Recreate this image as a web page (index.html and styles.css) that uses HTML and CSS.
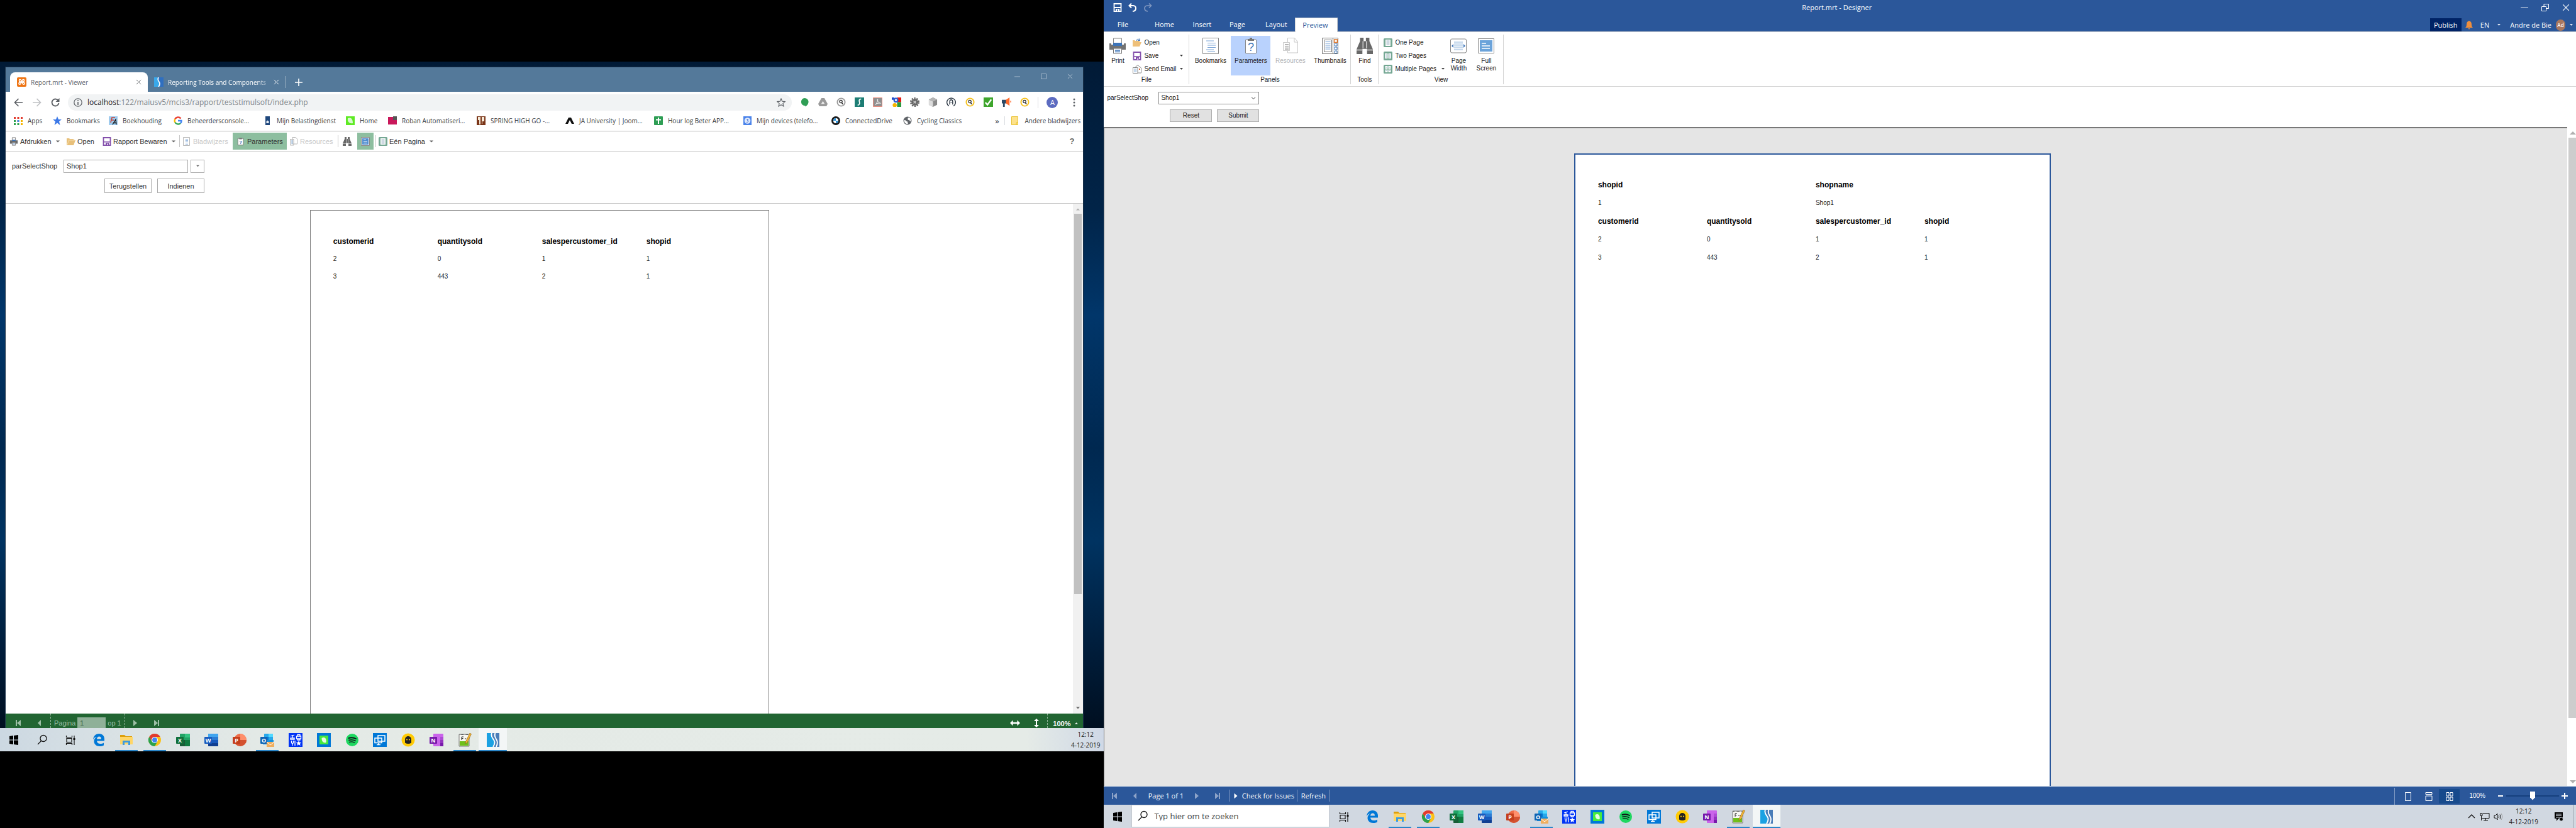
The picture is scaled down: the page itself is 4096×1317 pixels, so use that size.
FILE: index.html
```html
<!DOCTYPE html>
<html lang="nl">
<head>
<meta charset="utf-8">
<title>Report.mrt</title>
<link rel="stylesheet" href="styles.css">
</head>
<body>
<svg class="sprite" aria-hidden="true">
  <defs>
    <symbol id="win" viewBox="0 0 22 22"><path d="M4 5l6-1v6.500H4zM11 4l7-1v7.500h-7zM4 11.500h6V18l-6-1zM11 11.500h7V19l-7-1z" fill="#000"/></symbol>
    <symbol id="search" viewBox="0 0 22 22"><g fill="none" stroke="#111" stroke-width="1.300"><circle cx="13" cy="8.500" r="5"/><path d="M9.500 12.500L4 18"/></g></symbol>
    <symbol id="taskview" viewBox="0 0 22 22"><g fill="none" stroke="#111" stroke-width="1.200"><rect x="5" y="8.500" width="8" height="6"/><path d="M4.500 4v2.500h9V4M4.500 19v-2.500h9V19M17 4v15"/></g><path d="M15.500 8h3v3h-3z" fill="#111"/></symbol>
    <symbol id="edge" viewBox="0 0 22 22"><path d="M2 10.500C2.500 5 6 1 11.500 1c5.500 0 8.500 4 8.500 8.500v3H8c.3 3 2.500 4.500 5.500 4.500 2 0 3.800-.5 5.500-1.500v4c-2 1-4.200 1.500-6.500 1.500C7 21 3.500 17.500 3.500 13c0-3 1.500-5.500 4.500-7-3 .5-5 2-6 4.500zM8 9.500h7c0-2.500-1.200-4-3.300-4C9.700 5.500 8.400 7 8 9.500z" fill="#0078d7"/></symbol>
    <symbol id="folderbig" viewBox="0 0 22 22"><path d="M1 3h7l2 2h10v4H1z" fill="#dd9f0b"/><path d="M1 6h20v12H1z" fill="#ffd667"/><path d="M5 12h12v7h-3v-4H8v4H5z" fill="#3c9be0"/></symbol>
    <symbol id="chrome" viewBox="0 0 22 22"><circle cx="11" cy="11" r="10" fill="#fbc116"/><path d="M2.300 6A10 10 0 0 1 19.700 6H11L6.500 13.500z" fill="#e23b2e"/><path d="M2.300 6A10 10 0 0 0 11 21l4.500-7.500H6.600z" fill="#2ba24c"/><circle cx="11" cy="11" r="5" fill="#fff"/><circle cx="11" cy="11" r="3.900" fill="#4285f4"/></symbol>
    <symbol id="excel" viewBox="0 0 22 22"><rect x="6" y="1" width="16" height="20" rx="1" fill="#21a366"/><path d="M14 1h7a1 1 0 0 1 1 1v5h-8z" fill="#33c481"/><path d="M6 11h8v10H7a1 1 0 0 1-1-1z" fill="#185c37"/><path d="M14 11h8v9a1 1 0 0 1-1 1h-7z" fill="#107c41"/><rect y="6" width="12" height="11" rx="1" fill="#0f703b"/><text x="6" y="15" class="ico-letter">X</text></symbol>
    <symbol id="word" viewBox="0 0 22 22"><rect x="6" y="1" width="16" height="20" rx="1" fill="#2b7cd3"/><path d="M6 1h16v5H6z" fill="#41a5ee"/><path d="M6 11h16v5H6z" fill="#185abd"/><path d="M6 16h16v4a1 1 0 0 1-1 1H7a1 1 0 0 1-1-1z" fill="#103f91"/><rect y="6" width="12" height="11" rx="1" fill="#185abd"/><text x="6" y="15" class="ico-letter">W</text></symbol>
    <symbol id="ppt" viewBox="0 0 22 22"><circle cx="12" cy="11" r="10" fill="#ed6c47"/><path d="M12 1a10 10 0 0 1 10 10H12z" fill="#ff8f6b"/><path d="M2 11h20a10 10 0 0 1-20 0z" fill="#d35230"/><rect y="6" width="12" height="11" rx="1" fill="#c43e1c"/><text x="6" y="15" class="ico-letter">P</text></symbol>
    <symbol id="outlook" viewBox="0 0 22 22"><rect x="6" y="1" width="14" height="15" rx="1" fill="#28a8ea"/><path d="M6 6h7v5H6z" fill="#0078d4"/><path d="M13 1h7v5h-7z" fill="#50d9ff"/><path d="M4 11h17v7H4z" fill="#1490df"/><rect y="6" width="11" height="11" rx="1" fill="#0f64b4"/><text x="5.500" y="15" class="ico-letter">O</text><path d="M10 14h12v8H10z" fill="#efae5e"/><path d="M10 14l6 5 6-5" fill="none" stroke="#fff"/></symbol>
    <symbol id="tools" viewBox="0 0 22 22"><path d="M0 0h22v22H0z" fill="#0033f5"/><g stroke="#fff" stroke-width="1.300" fill="none"><path d="M3 8h6v2H3zM3 5l6-2M6 3v5M12.500 5h7v4h-7zM14 5V2.500h4V5M14 9v2h4V9M4.500 12v3a1.500 1.500 0 0 0 3 0v-3M6 16v4M10 12v8"/></g><path d="M16 12l1.200 2.800 3 .2-2.300 1.900.8 3-2.700-1.700-2.600 1.700.7-3-2.300-1.900 3-.2z" fill="#fff"/></symbol>
    <symbol id="leafapp" viewBox="0 0 22 22"><path d="M0 0h22v22H0z" fill="#0078d7"/><path d="M4 4h14v14H4z" fill="#46ea3c"/><path d="M7.500 8c5-3 8 1 7 7-4 1-7-1-7-7z" fill="#e6fbe4"/></symbol>
    <symbol id="spotify" viewBox="0 0 22 22"><circle cx="11" cy="11" r="10" fill="#1ed760"/><g fill="none" stroke="#10141a" stroke-linecap="round"><path d="M5.500 8c4-1.200 8-.8 11.500 1" stroke-width="1.900"/><path d="M6 11.300c3.500-1 7-.6 10 1" stroke-width="1.600"/><path d="M6.500 14.300c3-.7 5.800-.4 8.300 1" stroke-width="1.300"/></g></symbol>
    <symbol id="remote" viewBox="0 0 22 22"><path d="M0 0h22v22H0z" fill="#0078d7"/><g fill="#0078d7" stroke="#fff" stroke-width="1.500"><path d="M8 4h11v9H8zM3 8h11v7.500H3zM6 18.500h6M9 15.500v3"/></g></symbol>
    <symbol id="ghost" viewBox="0 0 22 22"><circle cx="11" cy="11" r="10.500" fill="#ffcb05"/><path d="M6 15.500V10a5 5 0 0 1 10 0v5.500q-2.500 1.500-5 1.500t-5-1.500z" fill="#222"/><circle cx="9" cy="10.500" r="1.100" fill="#ffcb05"/><circle cx="13" cy="10.500" r="1.100" fill="#ffcb05"/></symbol>
    <symbol id="onenote" viewBox="0 0 22 22"><rect x="6" y="1" width="16" height="20" rx="1" fill="#ca64ea"/><path d="M17 6h5v5h-5z" fill="#ae4bd5"/><path d="M17 11h5v5h-5z" fill="#9332bf"/><path d="M17 16h5v5h-5z" fill="#7719aa"/><rect y="6" width="12" height="11" rx="1" fill="#7719aa"/><text x="6" y="15" class="ico-letter">N</text></symbol>
    <symbol id="notepad" viewBox="0 0 22 22"><path d="M2 2h16v19H2z" fill="#f7f7f2" stroke="#777"/><path d="M3 13h14v7H3z" fill="#6fbf1a"/><path d="M3 2.500h14" stroke="#444" stroke-dasharray="1 1"/><path d="M6 11V6h3M6 8.500h2.500M11 9h2M14 9h2" stroke="#222" fill="none"/><path d="M19 0l2.500 1.500L15 15l-3 2 .5-3.500z" fill="#f2b632" stroke="#8d5a1b" stroke-width=".6"/></symbol>
    <symbol id="stimul" viewBox="0 0 22 22"><path d="M1 0h20v22H1z" fill="#4a7db8"/><path d="M1 0h8c-2 6 5 9 5 14 0 3-1 6-2 8H1z" fill="#1ba1e2"/><path d="M9 0c-3 7 4 9 4.500 14 .2 3-1 6-2.500 8M14.500 0c-3 6 2 9 3 13 .8 3-.5 7-1.500 9" stroke="#fff" stroke-width="1.900" fill="none"/></symbol>

    <symbol id="printer" viewBox="0 0 14 16"><path d="M4 1h6v5H4z" fill="#fff" stroke="#777"/><path d="M0 6h14v6H0z" fill="#6b6b6b"/><path d="M4 5h6v2H4z" fill="#3d74b8"/><path d="M4 10h6v5H4z" fill="#fff" stroke="#777"/><path d="M5 12.500h4" stroke="#3d74b8"/></symbol>
    <symbol id="folder" viewBox="0 0 14 14"><path d="M0 13V2h4l1 1h6v2h3l-3 8z" fill="#e8c07a"/><path d="M1 12l2.500-7H13" fill="none" stroke="#f5dcaa"/></symbol>
    <symbol id="folderopen" viewBox="0 0 14 14"><path d="M0 13V3h3l1 1h7v2h3l-3 7z" fill="#eec07a"/><path d="M6 4c0-3 4-4 5-1M11.500 0v3.500H8" fill="none" stroke="#3d74b8"/></symbol>
    <symbol id="disk" viewBox="0 0 14 14"><path d="M1.500 1h11v12h-11z" fill="#fff" stroke="#8450ac" stroke-width="1.800"/><path d="M1 7h12v1.500H1z" fill="#8450ac"/><path d="M5 9h5v4H5z" fill="#8450ac"/><path d="M7.500 10.500h1.500V13H7.500z" fill="#fff"/></symbol>
    <symbol id="diskwhite" viewBox="0 0 14 14"><path d="M1.500 1h11v12h-11zM1 7h12" fill="none" stroke="#fff" stroke-width="1.800"/><path d="M4 9h6v4H4z" fill="#fff"/><path d="M6 10h1.500v3H6z" fill="#2b579a"/></symbol>
    <symbol id="listpage" viewBox="0 0 14 14"><path d="M1.500.5h10v13h-10z" fill="#fff" stroke="#9a9a9a"/><path d="M4 3.500h5M4 5.500h5M4 7.500h5M4 9.500h5M4 11.500h5" stroke="#7ba4d6" stroke-dasharray="1 1 5"/></symbol>
    <symbol id="clip" viewBox="0 0 14 16"><path d="M1.500 2.500h10v12h-10z" fill="#fff" stroke="#777"/><path d="M4 1.500h5V4H4z" fill="#777"/><text x="6.500" y="12" class="ico-q">?</text></symbol>
    <symbol id="docs" viewBox="0 0 14 14"><path d="M5 .5h5L12.500 3v8H5zM1.500 3.500H7v9.500H1.500z" fill="#fff" stroke="#999"/><path d="M3 6h3M3 8h3M3 10h3" stroke="#6b9bd0"/></symbol>
    <symbol id="binoc" viewBox="0 0 14 14"><path d="M3 0h3v3h2V0h3v3l3 7v4H9v-4.500H5V14H0v-4l3-7z" fill="#686868"/><path d="M5.500 3v6M8.500 3v6M0 10.500h5M9 10.500h5" stroke="#e0e0e0" stroke-width=".7"/></symbol>
    <symbol id="full" viewBox="0 0 14 14"><path d="M.5.500h13v13H.5z" fill="#fff" stroke="#888"/><path d="M2 2h10v10H2z" fill="#4e8cd0"/><path d="M4 4.500h4M4 7h6M4 9.500h6" stroke="#fff"/></symbol>
    <symbol id="onepage" viewBox="0 0 14 14"><rect width="14" height="14" rx="1.500" fill="#74a793"/><path d="M3 2h8v10H3z" fill="#fff"/><path d="M4.500 4h5M4.500 6h5M4.500 8h5M4.500 10h5" stroke="#9fb4c6"/></symbol>
    <symbol id="twopages" viewBox="0 0 14 14"><rect width="14" height="14" rx="1.500" fill="#74a793"/><path d="M2 3h4.500v8H2zM7.500 3H12v8H7.500z" fill="#fff"/><path d="M3 5h2.500M3 7h2.500M3 9h2.500M8.500 5H11M8.500 7H11M8.500 9H11" stroke="#9fb4c6"/></symbol>
    <symbol id="multipages" viewBox="0 0 14 14"><rect width="14" height="14" rx="1.500" fill="#74a793"/><path d="M2.500 2h4v4.500h-4zM7.500 2h4v4.500h-4zM2.500 7.500h4V12h-4zM7.500 7.500h4V12h-4z" fill="#fff"/><path d="M3.500 4h2M8.500 4h2M3.500 9.500h2M8.500 9.500h2" stroke="#9fb4c6"/></symbol>
    <symbol id="mail" viewBox="0 0 14 14"><path d="M3 5l5-4.500L13.500 5v8H3z" fill="#fff" stroke="#888"/><path d="M.5 4.500h7.500v9H.5z" fill="#fff" stroke="#888"/><path d="M2 7h4.500M2 9h4.500M2 11h4.500" stroke="#8eb4dc"/><path d="M10 6h2v2h-2z" fill="#e0643c"/></symbol>
    <symbol id="bell" viewBox="0 0 12 14"><path d="M6 0c3 1 4 3 4 6 0 2 .5 4 2 5H0c1.500-1 2-3 2-5 0-3 1-5 4-6zM4.500 12h3L6 14z" fill="#ef8e3c"/></symbol>
    <symbol id="magn" viewBox="0 0 16 16"><circle cx="8" cy="8" r="6.500" fill="#fff" stroke="currentColor" stroke-width="2"/><circle cx="7.500" cy="7" r="2.300" fill="none" stroke="#222" stroke-width="1.300"/><path d="M9 9l2 2.500" stroke="#222" stroke-width="1.500"/></symbol>
    <symbol id="down" viewBox="0 0 8 4"><path d="M0 0h8L4 4z" fill="currentColor"/></symbol>
    <symbol id="up" viewBox="0 0 8 4"><path d="M0 4h8L4 0z" fill="currentColor"/></symbol>
    <symbol id="first" viewBox="0 0 10 12"><path d="M1 1h2v10H1zM9 1v10L3 6z" fill="currentColor"/></symbol>
    <symbol id="prev" viewBox="0 0 10 12"><path d="M7 1v10L2 6z" fill="currentColor"/></symbol>
    <symbol id="next" viewBox="0 0 10 12"><path d="M2 1v10l6-5z" fill="currentColor"/></symbol>
    <symbol id="last" viewBox="0 0 10 12"><path d="M7 1h2v10H7zM1 1v10l6-5z" fill="currentColor"/></symbol>
    <symbol id="cross" viewBox="0 0 10 10"><path d="M1 1l8 8M9 1L1 9" stroke="currentColor" fill="none"/></symbol>
    <symbol id="dash" viewBox="0 0 12 10"><path d="M0 5.500h12" stroke="currentColor"/></symbol>
  </defs>
</svg>

<main class="desktops">
  <section class="screen screen-left">
    <div class="wallpaper">
      <div class="browser">
        <header class="tabstrip">
          <div class="tab tab-on">
            <svg class="i15" viewBox="0 0 15 15"><rect width="15" height="15" rx="2" fill="#ee7414"/><path d="M3.500 4.500c0-1.500 2.500-1.500 3 0L9 10c.5 1.500 3 1.500 3 0 0-1-1-2-2-2H5c-1 0-2 1-2 2 0 1.500 2.500 1.500 3 0l2.500-5.500c.5-1.500 3-1.500 3 0S10.500 7 10 7H5c-.8 0-1.500-1-1.500-2.500z" fill="none" stroke="#fff" stroke-width="1.500"/></svg>
            <span>Report.mrt - Viewer</span>
            <button class="x" aria-label="Tab sluiten"><svg class="i9"><use href="#cross"/></svg></button>
          </div>
          <div class="tab">
            <svg class="i15" viewBox="0 0 15 15"><path d="M0 0h15v15H0z" fill="#2f6fc0"/><path d="M0 0h6c-2 5 3 6 3 10 0 2-1 4-2 5H0z" fill="#39a8ea"/><path d="M7 0c-3 6 2 6 2 10 0 2-1 4-2 5" stroke="#fff" stroke-width="1.700" fill="none"/></svg>
            <span class="fade">Reporting Tools and Components</span>
            <button class="x" aria-label="Tab sluiten"><svg class="i9"><use href="#cross"/></svg></button>
          </div>
          <button class="newtab" aria-label="Nieuw tabblad"><svg class="i12" viewBox="0 0 12 12"><path d="M6 0v12M0 6h12" stroke="#fff" stroke-width="1.600"/></svg></button>
          <div class="winctl">
            <button aria-label="Minimaliseren"><svg class="i9"><use href="#dash"/></svg></button>
            <button aria-label="Maximaliseren"><svg class="i9" viewBox="0 0 10 10"><path d="M.5.500h9v9h-9z" fill="none" stroke="currentColor"/></svg></button>
            <button aria-label="Sluiten"><svg class="i9"><use href="#cross"/></svg></button>
          </div>
        </header>

        <div class="navbar">
          <button aria-label="Vorige"><svg class="i14" viewBox="0 0 14 14"><path d="M14 7H1.500M7.500 1L1.500 7l6 6" fill="none" stroke="#5a5e63" stroke-width="1.700"/></svg></button>
          <button aria-label="Volgende"><svg class="i14" viewBox="0 0 14 14"><path d="M0 7h12.500M6.500 1l6 6-6 6" fill="none" stroke="#bfc1c4" stroke-width="1.700"/></svg></button>
          <button aria-label="Vernieuwen"><svg class="i14" viewBox="0 0 14 14"><path d="M12 4.500A5.500 5.500 0 1 0 12.500 8" fill="none" stroke="#5a5e63" stroke-width="1.800"/><path d="M13.500 0v6h-6z" fill="#5a5e63"/></svg></button>
          <div class="omnibox">
            <svg class="i14" viewBox="0 0 14 14"><circle cx="7" cy="7" r="6.200" fill="none" stroke="#5f6368" stroke-width="1.300"/><path d="M7 3v1.700M7 6v5" stroke="#5f6368" stroke-width="1.600"/></svg>
            <div class="url"><label for="url">localhost</label><input id="url" value=":122/maiusv5/mcis3/rapport/teststimulsoft/index.php"></div>
            <svg class="i14" viewBox="0 0 14 14"><path d="M7 1l1.800 4.200 4.500.4-3.400 3 1 4.400L7 10.700 3.100 13l1-4.400-3.400-3 4.500-.4z" fill="none" stroke="#5f6368" stroke-width="1.200"/></svg>
          </div>
          <div class="exts">
            <svg viewBox="0 0 16 16"><path d="M8 1a6.500 6.500 0 0 1 6.500 6.500C14.500 11 12 14 9 15.500V14A6.500 6.500 0 1 1 8 1z" fill="#2f9e55"/></svg>
            <svg viewBox="0 0 16 16"><path d="M5.500 1h5L16 11l-2 4H2l-2-4z" fill="#9a9a9a"/><path d="M8 6l3 5H5z" fill="#eee"/></svg>
            <svg class="grey"><use href="#magn"/></svg>
            <svg viewBox="0 0 16 16"><path d="M0 0h16v16H0z" fill="#1c7d74"/><path d="M11 3C8 2 7 5 8 7.500S8 13 5 13" fill="none" stroke="#fff" stroke-width="1.800"/></svg>
            <svg viewBox="0 0 16 16"><path d="M.5.500h15v15H.5z" fill="#8f8f8f" stroke="#f08877"/><path d="M4 12c3-2 5-8 4-9s-1 5 5 7c-3-1-6 0-9 2z" fill="none" stroke="#fff"/></svg>
            <svg viewBox="0 0 16 16"><path d="M0 0h16v16H0z" fill="#fff"/><path d="M9 0h7v8H9z" fill="#e31b12"/><path d="M9 8h7v8H9z" fill="#2b9a3e"/><path d="M0 0h4v4H0z" fill="#1d49c7"/><circle cx="7" cy="4.500" r="3" fill="#fff" stroke="#2f5fd0" stroke-width="2.500"/><circle cx="5" cy="13" r="3.500" fill="#f6b400"/></svg>
            <svg viewBox="0 0 16 16"><circle cx="8" cy="8" r="6.500" fill="none" stroke="#666" stroke-width="3" stroke-dasharray="2.500 1.600"/><circle cx="8" cy="8" r="5.500" fill="#666"/><path d="M6 6l4 4M6 10l1-1M9 7l1-1" stroke="#fff" stroke-width="1.300"/></svg>
            <svg viewBox="0 0 16 16"><path d="M8 0l7 3.500v9L8 16l-7-3.500v-9z" fill="#8a8a8a"/><path d="M8 7v9l-7-3.500v-9z" fill="#dcdcdc"/><path d="M8 0l7 3.500L8 7 1 3.500z" fill="#b5b5b5"/></svg>
            <svg viewBox="0 0 16 16"><path d="M4 14.500a7.300 7.300 0 1 1 8 0M5.500 12V7a2.500 3 0 0 1 5 0v5" fill="none" stroke="#2b3642" stroke-width="1.500"/><path d="M6 8.500h4" stroke="#2b3642" stroke-dasharray="1 .5"/></svg>
            <svg class="yellow"><use href="#magn"/></svg>
            <svg viewBox="0 0 16 16"><path d="M0 0h16v16H0z" fill="#3ea52c"/><path d="M3 8.500l3.500 4L13 3.500" fill="none" stroke="#fff" stroke-width="2.500"/></svg>
            <svg viewBox="0 0 16 16"><path d="M0 4h8v6H5v6H2v-6H0z" fill="#2c4a66"/><path d="M7 4l6-4v14L7 10z" fill="#ff6a2b"/><path d="M15 5.500v3" stroke="#ff6a2b" stroke-width="1.500"/></svg>
            <svg class="yellow"><use href="#magn"/></svg>
          </div>
          <div class="profile"><button class="avatar" aria-label="Profiel">A</button></div>
          <button aria-label="Menu"><svg class="i14" viewBox="0 0 14 14"><g fill="#5f6368"><circle cx="7" cy="2" r="1.500"/><circle cx="7" cy="7" r="1.500"/><circle cx="7" cy="12" r="1.500"/></g></svg></button>
        </div>

        <nav class="bookmarks">
          <a href="#"><svg viewBox="0 0 14 14"><path d="M0 1h3v3H0zM5.500 1h3v3h-3zM11 1h3v3h-3z" fill="#e23b2e"/><path d="M0 6h3v3H0z" fill="#2ba24c"/><path d="M5.500 6h3v3h-3zM11 6h3v3h-3zM11 11h3v3h-3z" fill="#f4b400"/><path d="M0 11h3v3H0zM5.500 11h3v3h-3z" fill="#2ba24c"/><path d="M5.500 6h3v3h-3z" fill="#4285f4"/></svg>Apps</a>
          <a href="#"><svg viewBox="0 0 14 14"><path d="M7 0l2 5h5l-4 3.300L11.500 14 7 10.600 2.500 14 4 8.300 0 5h5z" fill="#3b78e7"/></svg>Bookmarks</a>
          <a href="#"><svg viewBox="0 0 14 14"><path d="M0 0h14v14H0z" fill="#9fcbee"/><path d="M3 10l2-8h5M4 6h4" stroke="#c8463c" stroke-width="1.500" fill="none"/><path d="M6 13l5-8 1 8M8 10.500h4" stroke="#111" stroke-width="1.400" fill="none"/></svg>Boekhouding</a>
          <a href="#"><svg viewBox="0 0 14 14"><g fill="none" stroke-width="2.400"><path d="M11.500 3.500A5.500 5.500 0 0 0 2.300 4.500" stroke="#ea4335"/><path d="M2.300 4.500a5.500 5.500 0 0 0 0 5" stroke="#fbbc05"/><path d="M2.300 9.500a5.500 5.500 0 0 0 8.700 1.500" stroke="#34a853"/><path d="M11 11c1-1 1.600-2.500 1.500-4H7" stroke="#4285f4"/></g></svg>Beheerdersconsole...</a>
          <a href="#"><svg viewBox="0 0 14 14"><path d="M4 0h7v14H4z" fill="#1f477c"/><path d="M5.500 11V8l2-1.500 2 1.500v3z" fill="#e8eef5"/></svg>Mijn Belastingdienst</a>
          <a href="#"><svg viewBox="0 0 14 14"><path d="M0 0h14v14H0z" fill="#5fea24"/><path d="M3 3c5-2 8 1 8 8-5 1-9-2-8-8z" fill="#d7f9ce"/></svg>Home</a>
          <a href="#"><svg viewBox="0 0 14 14"><path d="M0 1h14v12H0z" fill="#c9185b"/><path d="M8 0h6v6H8z" fill="#555"/></svg>Roban Automatiseri...</a>
          <a href="#"><svg viewBox="0 0 14 14"><path d="M0 0h14v14H0z" fill="#7a3518"/><path d="M2 1h4v12H4V6H2zM8 1h4v7H9v4H8z" fill="#f6ead8"/></svg>SPRING HIGH GO -...</a>
          <a href="#"><svg viewBox="0 0 14 14"><path d="M0 12L5 2h4l5 10h-4L7 6l-3 6z" fill="#111"/></svg>JA University | Joom...</a>
          <a href="#"><svg viewBox="0 0 14 14"><rect width="14" height="14" rx="1" fill="#2f9e55"/><path d="M7 2v10M3 5.500h8" stroke="#fff" stroke-width="2"/></svg>Hour log Beter APP...</a>
          <a href="#"><svg viewBox="0 0 14 14"><path d="M1 0h13v14H1z" fill="#4a83ea"/><circle cx="7.500" cy="7" r="4.800" fill="#dfe9fb"/><path d="M6 4.500h2.500L7.500 6.500c2 0 2 3-1.500 3" stroke="#3367d6" fill="none"/></svg>Mijn devices (telefo...</a>
          <a href="#"><svg viewBox="0 0 14 14"><circle cx="7" cy="7" r="7" fill="#1b1b1b"/><circle cx="7" cy="7" r="4" fill="#fff"/><path d="M7 3v4H3a4 4 0 0 1 4-4zM7 11V7h4a4 4 0 0 1-4 4z" fill="#2f93d8"/></svg>ConnectedDrive</a>
          <a href="#"><svg viewBox="0 0 14 14"><circle cx="7" cy="7" r="6.500" fill="#5f6368"/><path d="M2 6c3 0 2 2 4 2s1 4 2 4c-4 1-7-3-6-6zM8 2c3 0 5 3 4 6-2 0-1-2-3-2S7 4 8 2z" fill="#fff"/></svg>Cycling Classics</a>
          <button class="more" aria-label="Meer bladwijzers">»</button>
          <a href="#" class="other"><svg viewBox="0 0 14 14"><path d="M1.500.500h10v13h-10z" fill="#fde28c" stroke="#e8c12e"/><path d="M9 13.500V10h2.500" fill="none" stroke="#e8c12e"/></svg>Andere bladwijzers</a>
        </nav>

        <div class="viewerbar">
          <button><svg><use href="#printer"/></svg>Afdrukken<svg class="arr"><use href="#down"/></svg></button>
          <button><svg><use href="#folder"/></svg>Open</button>
          <button><svg><use href="#disk"/></svg>Rapport Bewaren<svg class="arr"><use href="#down"/></svg></button>
          <i class="vsep"></i>
          <button disabled><svg><use href="#listpage"/></svg>Bladwijzers</button>
          <button class="on"><svg><use href="#clip"/></svg>Parameters</button>
          <button disabled><svg><use href="#docs"/></svg>Resources</button>
          <i class="vsep"></i>
          <button aria-label="Zoeken"><svg><use href="#binoc"/></svg></button>
          <button class="on" aria-label="Volledig scherm"><svg><use href="#full"/></svg></button>
          <i class="vsep"></i>
          <button><svg><use href="#onepage"/></svg>Eén Pagina<svg class="arr"><use href="#down"/></svg></button>
          <button class="help">?</button>
        </div>

        <form class="vparams">
          <label for="shop-l">parSelectShop</label>
          <input id="shop-l" value="Shop1">
          <button type="button" class="drop" aria-label="Kies"><svg class="arr"><use href="#down"/></svg></button>
          <div class="vbtns"><button type="button">Terugstellen</button><button type="button">Indienen</button></div>
        </form>

        <div class="viewport">
          <article class="sheet sheet-l">
            <table class="data">
              <tr><th>customerid</th><th>quantitysold</th><th>salespercustomer_id</th><th>shopid</th></tr>
              <tr><td>2</td><td>0</td><td>1</td><td>1</td></tr>
              <tr><td>3</td><td>443</td><td>2</td><td>1</td></tr>
            </table>
          </article>
          <div class="scroll"><svg class="arr pale"><use href="#up"/></svg><i class="thumb"></i><i class="rest"></i><svg class="arr"><use href="#down"/></svg></div>
        </div>

        <footer class="pager">
          <button aria-label="Eerste"><svg class="i12"><use href="#first"/></svg></button>
          <button aria-label="Vorige"><svg class="i12"><use href="#prev"/></svg></button>
          <div class="pageno"><label for="pg">Pagina</label><input id="pg" value="1"><span>op 1</span></div>
          <button aria-label="Volgende"><svg class="i12"><use href="#next"/></svg></button>
          <button aria-label="Laatste"><svg class="i12"><use href="#last"/></svg></button>
          <span class="spring"></span>
          <button class="fit" aria-label="Paginabreedte"><svg class="i16" viewBox="0 0 14 14"><path d="M0 7l4-4v3h6V3l4 4-4 4V8H4v3z" fill="#fff"/></svg></button>
          <button class="fit" aria-label="Paginahoogte"><svg class="i14" viewBox="0 0 14 14"><path d="M7 0l4 4H8v6h3l-4 4-4-4h3V4H3z" fill="#fff"/></svg></button>
          <button class="zoom">100%<svg class="tiny"><use href="#up"/></svg></button>
        </footer>
      </div>
    </div>
    <footer class="taskbar taskbar-l">
      <div class="tasks tasks18">
        <button aria-label="Start"><svg><use href="#win"/></svg></button>
        <button aria-label="Zoeken"><svg><use href="#search"/></svg></button>
        <button aria-label="Taakweergave"><svg><use href="#taskview"/></svg></button>
        <button aria-label="Edge"><svg><use href="#edge"/></svg></button>
        <button aria-label="Verkenner" class="open"><svg><use href="#folderbig"/></svg></button>
        <button aria-label="Chrome" class="open"><svg><use href="#chrome"/></svg></button>
        <button aria-label="Excel"><svg><use href="#excel"/></svg></button>
        <button aria-label="Word"><svg><use href="#word"/></svg></button>
        <button aria-label="PowerPoint"><svg><use href="#ppt"/></svg></button>
        <button aria-label="Outlook" class="open"><svg><use href="#outlook"/></svg></button>
        <button aria-label="Beheer"><svg><use href="#tools"/></svg></button>
        <button aria-label="Leaf"><svg><use href="#leafapp"/></svg></button>
        <button aria-label="Spotify"><svg><use href="#spotify"/></svg></button>
        <button aria-label="Extern bureaublad"><svg><use href="#remote"/></svg></button>
        <button aria-label="Ghost"><svg><use href="#ghost"/></svg></button>
        <button aria-label="OneNote"><svg><use href="#onenote"/></svg></button>
        <button aria-label="Notepad++" class="open"><svg><use href="#notepad"/></svg></button>
        <button aria-label="Designer" class="active"><svg><use href="#stimul"/></svg></button>
      </div>
      <div class="clock"><span>12:12</span><span>4-12-2019</span></div>
    </footer>
  </section>

  <section class="screen screen-right">
    <header class="titlebar">
      <div class="quick">
        <button aria-label="Save"><svg class="i14"><use href="#diskwhite"/></svg></button>
        <button aria-label="Undo"><svg class="i14" viewBox="0 0 14 14"><path d="M2 4h6c5 0 6 8-1 9M5 .5L1.500 4 5 7.500" fill="none" stroke="#fff" stroke-width="2"/></svg></button>
        <button aria-label="Redo"><svg class="i14" viewBox="0 0 14 14"><path d="M12 4H6C1 4 0 12 7 13M9 .5L12.500 4 9 7.500" fill="none" stroke="#8097c0" stroke-width="1.700"/></svg></button>
      </div>
      <h1>Report.mrt - Designer</h1>
      <div class="winbtns">
        <button aria-label="Minimize"><svg class="i12"><use href="#dash"/></svg></button>
        <button aria-label="Restore"><svg class="i12" viewBox="0 0 12 12"><path d="M.5 4.500h7v7h-7zM4 4V.5h7.500v7H8" fill="none" stroke="currentColor"/></svg></button>
        <button aria-label="Close"><svg class="i12"><use href="#cross"/></svg></button>
      </div>
    </header>
    <nav class="ribtabs">
      <button>File</button><button>Home</button><button>Insert</button><button>Page</button><button>Layout</button><button class="sel">Preview</button>
      <div class="account">
        <button class="publish">Publish</button>
        <svg class="bell"><use href="#bell"/></svg>
        <button class="lang">EN<svg class="tiny"><use href="#down"/></svg></button>
        <button class="user">Andre de Bie<b>Ad</b><svg class="tiny"><use href="#down"/></svg></button>
      </div>
    </nav>

    <div class="ribbon">
      <section class="group g-file">
        <div class="tools">
          <button class="big"><svg viewBox="0 0 26 26"><path d="M6.500 1h13v11h-13z" fill="#fff" stroke="#888"/><path d="M0 9h3v2h20V9h3v10H0z" fill="#737373"/><path d="M6 8h14v5H6z" fill="#3d74b8"/><path d="M6.500 17h13v8h-13z" fill="#fff" stroke="#737373"/><path d="M9 20h8M9 22.500h8" stroke="#3d74b8" stroke-width="1.300"/></svg><span>Print</span></button>
          <div class="stack">
            <button><svg><use href="#folderopen"/></svg>Open</button>
            <button><svg><use href="#disk"/></svg>Save<svg class="tiny"><use href="#down"/></svg></button>
            <button><svg><use href="#mail"/></svg>Send Email<svg class="tiny"><use href="#down"/></svg></button>
          </div>
        </div>
        <h2>File</h2>
      </section>
      <section class="group g-panels">
        <div class="tools">
          <button class="big"><svg viewBox="0 0 26 26"><path d="M.5.500h25v25H.5z" fill="#fff" stroke="#888"/><path d="M6 5h12M8 8.500h13M8 12h13M8 15.500h13M6 19h12M8 22h12" stroke="#7ba4d6" stroke-width="1.200"/></svg><span>Bookmarks</span></button>
          <button class="big sel"><svg viewBox="0 0 26 26"><rect x="4.500" y="3" width="17" height="22" rx="1" fill="#fff" stroke="#888"/><path d="M8 2h3V0h4v2h3v3H8z" fill="#777"/><text x="13" y="21" class="ico-q big-q">?</text></svg><span>Parameters</span></button>
          <button class="big" disabled><svg viewBox="0 0 26 26"><path d="M8.500.500h11l5 6v17.500h-16zM19 1v6h5.500" fill="#fff" stroke="#c8c8c8"/><path d="M1.500 7.500h10v13h-10z" fill="#fff" stroke="#c8c8c8"/><path d="M4 11h6M4 14.500h6M4 18h6" stroke="#b5b5b5" stroke-width="2"/></svg><span>Resources</span></button>
          <button class="big"><svg viewBox="0 0 26 26"><path d="M.5.500h25v25H.5z" fill="#fff" stroke="#777"/><path d="M3.500 3.500h12v19h-12z" fill="#fff" stroke="#777"/><path d="M5.500 6h8M5.500 9h8M5.500 12h8M5.500 15h8M5.500 18h8" stroke="#7ba4d6" stroke-width="1.200"/><path d="M17.500 1v25" stroke="#777"/><path d="M20 9h4v4h-4zM20 15h4v4h-4zM20 21h4v3.500h-4z" fill="#fff" stroke="#3d74b8"/><path d="M19.500 3h5v4.500h-5z" fill="#fff" stroke="#e0782c" stroke-width="1.500"/></svg><span>Thumbnails</span></button>
        </div>
        <h2>Panels</h2>
      </section>
      <section class="group g-tools">
        <div class="tools"><button class="big"><svg><use href="#binoc"/></svg><span>Find</span></button></div>
        <h2>Tools</h2>
      </section>
      <section class="group g-view">
        <div class="tools">
          <div class="stack">
            <button><svg><use href="#onepage"/></svg>One Page</button>
            <button><svg><use href="#twopages"/></svg>Two Pages</button>
            <button><svg><use href="#multipages"/></svg>Multiple Pages<svg class="tiny"><use href="#down"/></svg></button>
          </div>
          <button class="big"><svg viewBox="0 0 26 26"><rect x=".5" y="2" width="25" height="22" rx="2" fill="#fff" stroke="#888"/><path d="M6 7h14M6 10h14M6 13h14M6 16h14M6 19h14" stroke="#8eb4dc"/><path d="M2 13l3-3v6zM24 13l-3-3v6z" fill="#3d74b8"/></svg><span>Page<br>Width</span></button>
          <button class="big"><svg viewBox="0 0 26 26"><path d="M.5 1.500h25v23H.5z" fill="#fff" stroke="#888"/><path d="M3 4h20v18H3z" fill="#6ba3da"/><path d="M6 9h7M6 13h13M6 17h13" stroke="#fff" stroke-width="1.400"/></svg><span>Full<br>Screen</span></button>
        </div>
        <h2>View</h2>
      </section>
    </div>

    <form class="dparams">
      <label for="shop-r">parSelectShop</label>
      <div class="combo"><select id="shop-r"><option>Shop1</option></select><svg class="i8" viewBox="0 0 8 8"><path d="M1 2.500l3 3 3-3" fill="none" stroke="#444"/></svg></div>
      <div class="dbtns"><button type="button">Reset</button><button type="button">Submit</button></div>
    </form>

    <div class="preview">
      <div class="canvas">
        <article class="sheet sheet-r">
          <table class="data two">
            <tr><th>shopid</th><th>shopname</th></tr>
            <tr><td>1</td><td>Shop1</td></tr>
          </table>
          <table class="data">
            <tr><th>customerid</th><th>quantitysold</th><th>salespercustomer_id</th><th>shopid</th></tr>
            <tr><td>2</td><td>0</td><td>1</td><td>1</td></tr>
            <tr><td>3</td><td>443</td><td>2</td><td>1</td></tr>
          </table>
        </article>
      </div>
      <div class="scroll scroll-r"><svg class="arr pale"><use href="#up"/></svg><i class="thumb"></i><i class="rest"></i><svg class="arr pale"><use href="#down"/></svg></div>
    </div>

    <footer class="status">
      <button class="dim" aria-label="First"><svg class="i12"><use href="#first"/></svg></button>
      <button class="dim" aria-label="Previous"><svg class="i12"><use href="#prev"/></svg></button>
      <span>Page 1 of 1</span>
      <button class="dim" aria-label="Next"><svg class="i12"><use href="#next"/></svg></button>
      <button class="dim" aria-label="Last"><svg class="i12"><use href="#last"/></svg></button>
      <button class="check"><svg class="i10"><use href="#next"/></svg>Check for Issues</button>
      <button class="refresh">Refresh</button>
      <span class="spring"></span>
      <div class="modes">
        <button aria-label="One page"><svg class="i14" viewBox="0 0 14 14"><path d="M2.500.500h9v13h-9z" fill="none" stroke="#fff"/></svg></button>
        <button aria-label="Continuous"><svg class="i14" viewBox="0 0 14 14"><path d="M2 .5h10v3H2zM2 6h10v7.500H2z" fill="none" stroke="#fff"/></svg></button>
        <button class="sel" aria-label="Multiple pages"><svg class="i14" viewBox="0 0 14 14"><path d="M2 .5h4V6H2zM8 .5h4V6H8zM2 8h4v5.500H2zM8 8h4v5.500H8z" fill="none" stroke="#fff"/></svg></button>
      </div>
      <label class="pct" for="zoom">100%</label>
      <button aria-label="Zoom out"><svg class="i10" viewBox="0 0 10 10"><path d="M1 5h8" stroke="#fff" stroke-width="2"/></svg></button>
      <input type="range" id="zoom" min="0" max="100" value="50">
      <button aria-label="Zoom in"><svg class="i10" viewBox="0 0 10 10"><path d="M0 5h10M5 0v10" stroke="#fff" stroke-width="2"/></svg></button>
    </footer>

    <footer class="taskbar taskbar-r">
      <button class="start" aria-label="Start"><svg class="i22"><use href="#win"/></svg></button>
      <div class="find"><svg class="i22"><use href="#search"/></svg><input aria-label="Zoeken" value="Typ hier om te zoeken"></div>
      <div class="tasks tasks16">
        <button aria-label="Taakweergave"><svg><use href="#taskview"/></svg></button>
        <button aria-label="Edge"><svg><use href="#edge"/></svg></button>
        <button aria-label="Verkenner" class="open"><svg><use href="#folderbig"/></svg></button>
        <button aria-label="Chrome" class="open"><svg><use href="#chrome"/></svg></button>
        <button aria-label="Excel"><svg><use href="#excel"/></svg></button>
        <button aria-label="Word"><svg><use href="#word"/></svg></button>
        <button aria-label="PowerPoint"><svg><use href="#ppt"/></svg></button>
        <button aria-label="Outlook" class="open"><svg><use href="#outlook"/></svg></button>
        <button aria-label="Beheer"><svg><use href="#tools"/></svg></button>
        <button aria-label="Leaf"><svg><use href="#leafapp"/></svg></button>
        <button aria-label="Spotify"><svg><use href="#spotify"/></svg></button>
        <button aria-label="Extern bureaublad"><svg><use href="#remote"/></svg></button>
        <button aria-label="Ghost"><svg><use href="#ghost"/></svg></button>
        <button aria-label="OneNote"><svg><use href="#onenote"/></svg></button>
        <button aria-label="Notepad++" class="open"><svg><use href="#notepad"/></svg></button>
        <button aria-label="Designer" class="active"><svg><use href="#stimul"/></svg></button>
      </div>
      <div class="tray">
        <svg class="i14" viewBox="0 0 14 14"><path d="M2 9l5-5 5 5" fill="none" stroke="#111" stroke-width="1.300"/></svg>
        <svg class="i16" viewBox="0 0 16 16"><path d="M5 2.500h10v8H3.500M9.500 10.500V14M6 14h7M1 2.500h3v4H1zM2.500 6.500V14" fill="none" stroke="#111"/></svg>
        <svg class="i16" viewBox="0 0 16 16"><path d="M1 6h2l3-3v10l-3-3H1z" fill="none" stroke="#111"/><path d="M8 6q1.500 2 0 4M10 4.500q2.500 3.500 0 7" fill="none" stroke="#111"/><path d="M12 3q3.500 5 0 10" fill="none" stroke="#999"/></svg>
      </div>
      <div class="clock"><span>12:12</span><span>4-12-2019</span></div>
      <button class="notes" aria-label="Meldingen"><svg class="i16" viewBox="0 0 16 16"><path d="M2 1h13v10h-7l-3 4v-4H2z" fill="#000"/><path d="M4 4h9M4 6.500h9M4 9h6" stroke="#d1d8e1"/><circle cx="12.500" cy="12" r="3" fill="#000" stroke="#d1d8e1"/></svg></button>
    </footer>
  </section>
</main>
</body>
</html>
```
FILE: styles.css
```css
* { box-sizing: border-box; }
body { margin: 0; background: #000; font-family: "Open Sans", "Noto Sans", sans-serif; font-size: 11px; line-height: 14px; color: #333; white-space: nowrap; }
button, input, select { font: inherit; color: inherit; margin: 0; padding: 0; border: 0; background: none; border-radius: 0; outline: 0; }
button { display: flex; align-items: center; justify-content: center; }
a { color: inherit; text-decoration: none; display: flex; align-items: center; }
svg { display: block; flex: none; }
h1, h2 { margin: 0; font: inherit; }
.sprite { width: 0; height: 0; position: absolute; }
.i8 { width: 8px; height: 8px; }
.i9 { width: 9px; height: 9px; }
.i10 { width: 10px; height: 10px; }
.i12 { width: 12px; height: 12px; }
.i14 { width: 14px; height: 14px; }
.i15 { width: 15px; height: 15px; }
.i16 { width: 16px; height: 16px; }
.i22 { width: 22px; height: 22px; }
.arr { width: 6px; height: 4px; color: #666; }
.tiny { width: 5px; height: 3px; }
.pale { color: #b0b0b0; }
.spring { flex: 1; }
.ico-letter { font: bold 9px "Open Sans", sans-serif; fill: #fff; text-anchor: middle; }
.ico-q { font: bold 9px "Liberation Sans", sans-serif; fill: #3d74b8; text-anchor: middle; }
.big-q { font-size: 18px; font-weight: 400; }

.desktops { display: flex; height: 100vh; }
.screen { display: flex; flex-direction: column; min-width: 0; }
.screen-left { flex: 3 1 0; padding: 98px 0 122px; }
.screen-right { flex: 4 1 0; background: #fff; }

/* Left screen: browser */
.wallpaper { flex: 1; min-height: 0; display: flex; padding: 9px 33px 0 9px; background: linear-gradient(#011a36, #012448 22%, #01366a 38%, #002850 58%, #003361 72%, #001d3b 88%, #000f20); }
.browser { flex: 1; min-width: 0; display: flex; flex-direction: column; background: #fff; box-shadow: 0 0 0 1px #1b3149; }
.tabstrip { height: 39px; display: flex; align-items: flex-end; background: #54799a; padding-left: 7px; color: #fff; font-size: 10px; }
.tab { height: 31px; display: flex; align-items: center; gap: 7px; width: 219px; padding: 0 10px 0 11px; }
.tab-on { background: #fff; color: #5f6368; border-radius: 8px 8px 0 0; }
.tab span { flex: 1; }
.tab:not(.tab-on) { padding-left: 10px; }
.fade { mask-image: linear-gradient(90deg, #000 88%, rgba(0, 0, 0, .2)); }
.newtab { width: 40px; height: 19px; margin-bottom: 6px; border-left: 1px solid #a5b8c8; }
.winctl { margin-left: auto; align-self: flex-start; display: flex; color: #b4c5d4; }
.winctl button { width: 42px; height: 28px; }

.navbar { height: 33px; display: grid; grid-template-columns: 30px 29px 29px 1fr 380px 50px 28px; padding-left: 5px; align-items: center; }
.omnibox { height: 26px; margin: 0 5px 0 6px; padding: 0 10px 0 9px; border-radius: 13px; background: #f1f3f4; display: flex; align-items: center; gap: 8px; }
.url { flex: 1; display: flex; font-size: 12px; line-height: 18px; }
.url label { color: #202124; }
.url input { flex: 1; color: #80868b; }
.exts { display: grid; grid-template-columns: repeat(13, 1fr); justify-items: center; }
.exts svg { width: 15px; height: 15px; }
.grey { color: #999; }
.yellow { color: #f5bf16; }
.profile { margin-left: 6px; padding-left: 13px; border-left: 1px solid #dadce0; }
.avatar { height: 18px; width: 18px; border-radius: 9px; background: #5c6bc0; color: #fff; }

.bookmarks { height: 30px; border-bottom: 1px solid #b6b6b6; padding: 0 5px 3px 13px; display: grid; align-items: center; font-size: 10px; color: #3c4043; grid-template-columns: 62px 89px 103px 142px 132px 67px 141px 141px 141px 141px 141px 114px 1fr 24px 120px; }
.bookmarks a { gap: 8px; }
.bookmarks svg { width: 14px; height: 14px; }
.more { font-size: 13px; }
.other { border-left: 1px solid #dadce0; padding-left: 9px; }

.viewerbar { height: 32px; border-bottom: 1px solid #c6c6c6; padding-left: 6px; display: grid; align-items: center; grid-template-columns: 91px 57px 122px 5px 80px 90px 77px 8px 23px 29px 5px 100px 1fr; font-family: "Liberation Sans", Arial, sans-serif; color: #333; }
.viewerbar button { gap: 3px; justify-content: flex-start; height: 27px; }
.viewerbar svg { width: 14px; height: 14px; }
.viewerbar .arr, .vparams .arr { width: 6px; height: 4px; margin-left: 4px; }
.viewerbar button:disabled { color: #c8c8c8; }
.viewerbar button:disabled svg { opacity: .7; }
.viewerbar .on { background: #8dbe9f; justify-self: start; padding: 0 6px; }
.vsep { height: 19px; width: 1px; background: #c6c6c6; }
.viewerbar .help { justify-self: end; padding-right: 14px; font-size: 13px; font-weight: bold; color: #666; }

.vparams { height: 83px; border-bottom: 1px solid #c6c6c6; padding: 12px 10px; display: grid; grid-template-columns: 78px 198px 22px; column-gap: 4px; row-gap: 9px; align-content: start; align-items: center; justify-content: start; font-family: "Liberation Sans", Arial, sans-serif; }
.vparams label { line-height: 22px; }
.vparams > input { height: 21px; border: 1px solid #ababab; padding: 0 4px; }
.vparams button { border: 1px solid #ababab; height: 22px; width: 75px; }
.vparams .drop { width: 22px; height: 21px; }
.vparams .drop svg { margin: 0; width: 5px; }
.vbtns { grid-column: 1 / -1; display: flex; justify-content: flex-end; gap: 9px; }
.vbtns button { height: 23px; }

.viewport { flex: 1; min-height: 0; display: grid; grid-template-columns: 1fr 16px; }
.sheet { background: #fff; font-family: "Liberation Sans", Arial, sans-serif; color: #000; }
.sheet-l { width: 730px; margin: 10px auto 0; border: 1px solid #7d7d7d; border-bottom: 0; padding: 35px 28px 0 36px; }
.data { width: 100%; table-layout: fixed; border-collapse: collapse; }
.data th, .data td { padding: 0; text-align: left; height: 28px; font-size: 10px; color: #222; }
.data th { font-size: 12px; color: #000; }
.scroll { background: #f1f1f1; display: flex; flex-direction: column; align-items: center; padding: 7px 0; gap: 5px; }
.scroll .thumb { flex: 782 1 0; width: 12px; background: #c1c1c1; }
.scroll .rest { flex: 218 1 0; }

.pager { height: 23px; background: #216532; color: #9dbfa6; display: flex; align-items: flex-end; overflow: hidden; font-family: "Liberation Sans", Arial, sans-serif; padding-left: 3px; }
.pager button { width: 34px; height: 16px; }
.pageno { display: flex; align-items: flex-end; height: 23px; padding: 0 0 0 5px; width: 118px; border: dashed #8fb398; border-width: 0 1px; gap: 3px; line-height: 16px; }
.pageno input { width: 45px; height: 17px; background: #8fb098; color: #3c5f45; padding-left: 4px; }
.pager .fit { color: #fff; }
.pager .zoom { width: 57px; height: 23px; padding-top: 8px; border-left: 1px dashed #8fb398; color: #fff; font-weight: bold; gap: 7px; }

/* Taskbars */
.taskbar { height: 37px; display: flex; flex: none; color: #1b1b1b; }
.taskbar-l { background: linear-gradient(90deg, #ccd8e2, #dbe3e5 12%, #e4eae6 25%, #e5ebe7 93%, #cfd8e6); }
.taskbar-r { background: #d1d8e1; }
.tasks { display: grid; }
.tasks18 { width: 806px; grid-template-columns: repeat(18, 1fr); }
.tasks16 { width: 717px; grid-template-columns: repeat(16, 1fr); }
.tasks svg { width: 22px; height: 22px; }
.tasks .open { background: linear-gradient(#2a86c8, #2a86c8) center bottom / 36px 2px no-repeat; }
.tasks .active { background: linear-gradient(#2a86c8, #2a86c8) center bottom / 100% 2px no-repeat #f3f6f6; }
.clock { display: flex; flex-direction: column; align-items: center; justify-content: center; font-size: 10px; line-height: 17px; }
.taskbar-l .clock { margin-left: auto; padding-right: 6px; }
.start { width: 44px; }
.find { width: 315px; margin-bottom: 1px; background: #fff; border: 1px solid #c4c9cf; display: flex; align-items: center; padding-left: 6px; gap: 7px; font-size: 13px; color: #444; }
.find input { flex: 1; }
.tray { margin-left: auto; display: flex; align-items: center; gap: 6px; padding-right: 9px; }
.notes { width: 48px; border-right: 1px solid #9aa3ad; margin: 0 4px 0 8px; }

/* Right screen: designer */
.titlebar { height: 24px; flex: none; background: #2b579a; color: #fff; display: grid; grid-template-columns: 1fr auto 1fr; align-items: center; }
.titlebar h1 { padding-right: 10px; }
.quick { display: flex; gap: 10px; padding-left: 15px; }
.winbtns { display: flex; justify-content: flex-end; }
.winbtns button { width: 33px; height: 22px; }
.ribtabs { height: 27px; flex: none; background: #2b579a; border-bottom: 1px solid #d4d4d4; color: #fff; display: grid; grid-template-columns: 60px 72px 48px 64px 60px 68px 1fr; align-items: end; }
.ribtabs > button { height: 22px; }
.ribtabs .sel { background: #fff; color: #2b579a; height: 23px; margin-bottom: -1px; border: 1px solid #d4d4d4; border-bottom: 0; padding-right: 4px; }
.account { display: flex; justify-content: flex-end; align-items: center; height: 21px; align-self: end; }
.publish { background: #002366; width: 50px; height: 21px; margin-right: 6px; }
.bell { width: 12px; height: 14px; margin-right: 12px; }
.lang { gap: 13px; margin-right: 15px; }
.user { gap: 7px; padding-right: 5px; }
.user b { width: 15px; height: 18px; border-radius: 9px; background: #a8775f; font-size: 8px; line-height: 18px; font-weight: 600; text-align: center; }

.ribbon { height: 87px; flex: none; display: flex; padding-top: 4px; border-bottom: 1px solid #d4d4d4; font: 10px/12px "Liberation Sans", Arial, sans-serif; color: #222; }
.group { height: 79px; border-right: 1px solid #d4d4d4; display: flex; flex-direction: column; }
.g-file { width: 136px; }
.g-panels { width: 257px; }
.g-tools { width: 44px; }
.g-view { width: 199px; }
.tools { display: flex; height: 65px; padding-top: 2px; }
.group h2 { text-align: center; line-height: 14px; }
.big { flex-direction: column; justify-content: flex-start; gap: 5px; height: 63px; padding: 3px 0 0; }
.big svg { width: 26px; height: 26px; }
.big span { text-align: center; line-height: 12px; }
.big.sel { background: #b9d2fd; }
.big:disabled { color: #b5b5b5; }
.g-file .big { width: 44px; }
.g-panels .tools { padding-left: 1px; }
.g-panels .big { width: 63px; }
.g-panels .big:first-child { width: 65px; }
.g-tools .big { width: 43px; }
.g-view .big { width: 44px; }
.stack { display: flex; flex-direction: column; width: 88px; padding-left: 2px; }
.g-view .stack { width: 105px; padding-left: 8px; }
.stack button { height: 22px; gap: 4px; justify-content: flex-start; }
.stack svg { width: 14px; height: 14px; }
.stack .tiny { width: 5px; height: 3px; margin-left: auto; }
.g-file .stack { padding-right: 6px; }

.dparams { height: 64px; flex: none; padding: 8px 5px; display: grid; grid-template-columns: 82px 160px; row-gap: 8px; align-items: center; align-content: start; font: 10px/12px "Liberation Sans", Arial, sans-serif; color: #222; }
.combo { display: grid; grid-template-columns: 1fr 12px; align-items: center; border: 1px solid #8a8a8a; height: 20px; }
.combo select { appearance: none; grid-area: 1 / 1 / 2 / 3; padding-left: 3px; height: 18px; }
.combo svg { grid-area: 1 / 2; pointer-events: none; }
.dbtns { grid-column: 1 / -1; display: flex; justify-content: flex-end; gap: 8px; }
.dbtns button { width: 67px; height: 20px; background: #e1e1e1; border: 1px solid #adadad; }

.preview { flex: 1; min-height: 0; display: grid; grid-template-columns: 1fr 14px; border-bottom: 1px solid #fff; }
.canvas { background: #e5e5e5; border-top: 2px solid #777; border-left: 1px solid #777; padding: 40px 0 0 calc(32% + 2px); display: flex; }
.sheet-r { width: 758px; border: 2px solid #2b579a; border-bottom: 0; padding: 33px 26px 0 36px; }
.sheet-r .data th, .sheet-r .data td { height: 29px; }
.scroll-r { background: #fff; padding-bottom: 4px; align-items: flex-end; }
.scroll-r .arr { width: 10px; height: 5px; }
.scroll-r .thumb { flex: 912 1 0; background: #cdcdcd; }
.scroll-r .rest { flex: 88 1 0; }

.status { height: 29px; flex: none; background: #2b579a; color: #fff; display: flex; align-items: center; }
.status > button { width: 33px; }
.status .dim { color: #8da3c8; }
.status > span:not(.spring) { width: 65px; text-align: center; }
.status .check { width: 109px; height: 19px; gap: 5px; border: solid #7d97c2; border-width: 0 1px; margin-left: 2px; }
.status .refresh { width: 51px; height: 19px; border-right: 1px solid #7d97c2; }
.modes { display: flex; height: 27px; align-items: center; align-self: flex-end; border-left: 1px solid #7d97c2; padding-left: 4px; }
.modes button { width: 33px; height: 23px; }
.modes .sel { background: #164a8c; }
.pct { padding: 0 15px; font: 10px/14px "Liberation Sans", Arial, sans-serif; }
.status > .pct ~ button { width: 18px; }
.status input { appearance: none; width: 84px; height: 14px; background: linear-gradient(#16407e, #16407e) center / 100% 2px no-repeat; }
.status input::-webkit-slider-thumb { appearance: none; width: 8px; height: 14px; background: #fff; clip-path: polygon(0 0, 100% 0, 100% 70%, 50% 100%, 0 70%); }
.status > button:last-child { margin-right: 9px; }
```
